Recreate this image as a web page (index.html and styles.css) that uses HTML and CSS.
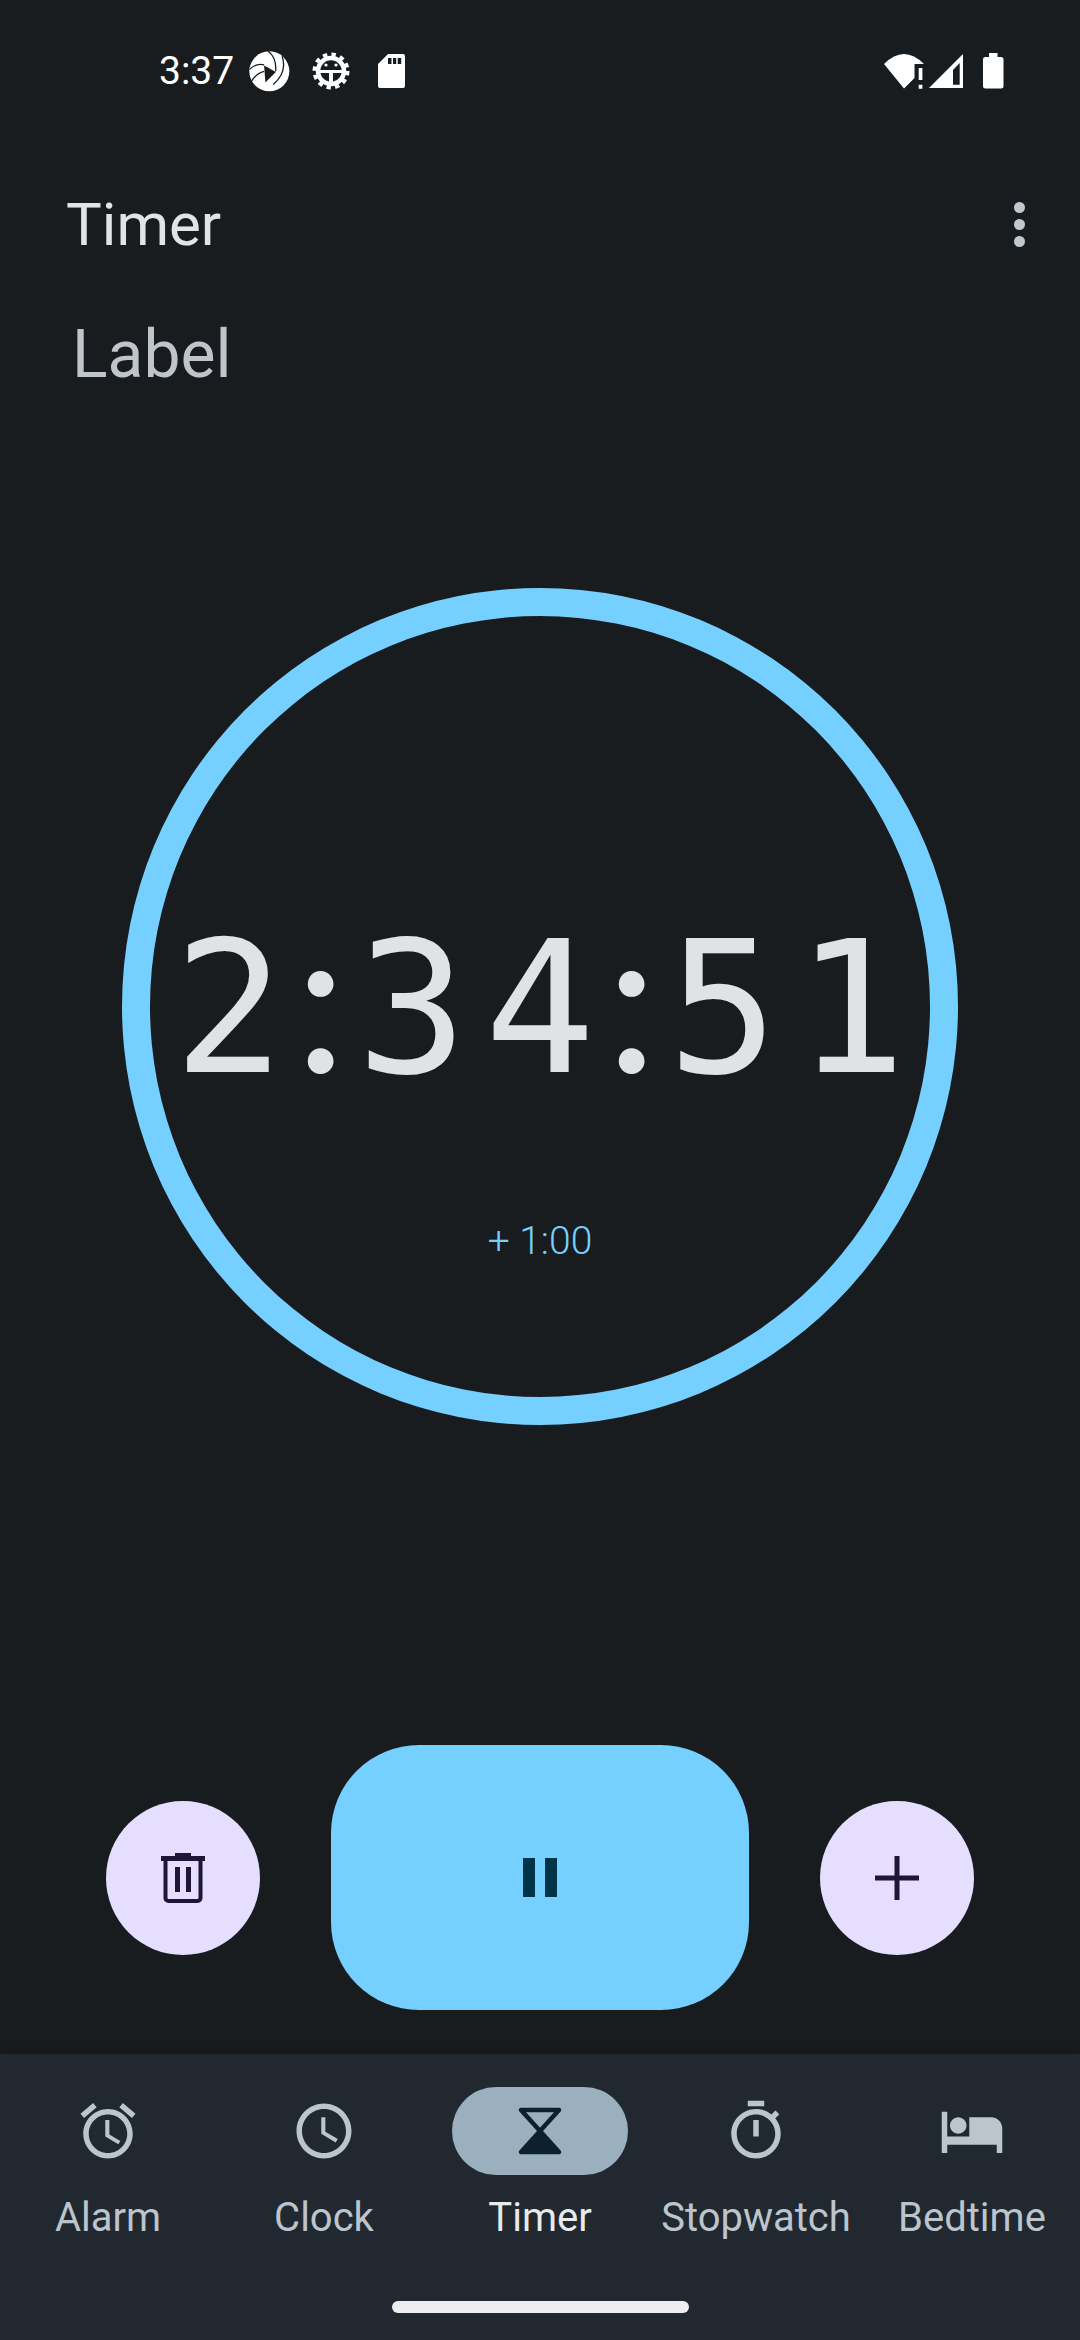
FILE: index.html
```html
<!DOCTYPE html>
<html lang="en">
<head>
<meta charset="UTF-8">
<title>Timer</title>
<link rel="stylesheet" href="styles.css">
</head>
<body>
<div class="phone">

    <div class="status">
        <span class="clock_text">3:37</span>
        <svg class="aperture" viewBox="27 30 123 125">
            <circle cx="88" cy="92" r="61" fill="#fff"/>
            <path d="M72 74L108 94L76 126Z" fill="#191c1f"/>
            <path d="M84 30C102 44 110 62 107 92M28 86C42 72 56 68 72 72M127 46C138 78 128 108 100 132M34 122C44 104 56 96 72 92" fill="none" stroke="#191c1f" stroke-width="4"/>
        </svg>
        <svg class="gear" viewBox="0 0 38 38">
            <circle cx="19" cy="19" r="13" fill="none" stroke="#fff" stroke-width="4.5"/>
            <circle cx="19" cy="19" r="16.5" fill="none" stroke="#fff" stroke-width="4" stroke-dasharray="4.32 4.32"/>
            <path d="M8 18h22v3H21v9h-4v-9H8z" fill="#fff"/>
            <circle cx="14" cy="13" r="1.6" fill="#fff"/>
            <circle cx="24" cy="13" r="1.6" fill="#fff"/>
        </svg>
        <svg class="sdcard" viewBox="0 0 27 34">
            <path fill-rule="evenodd" d="M10 0h15a2 2 0 0 1 2 2v30a2 2 0 0 1-2 2H2a2 2 0 0 1-2-2V10zM10 4v6h3.5V4zM15 4v6h3.2V4zM19.7 4v6h3.5V4z" fill="#fff"/>
        </svg>
        <span class="status_gap"></span>
        <svg class="wifi" viewBox="0 0 40 35">
            <path d="M0 10Q20 -10 40 10L30.5 10V24L20 34.5Z" fill="#fff"/>
            <path d="M34.7 14h3.7v12h-3.7zM34.7 30.7h3.7v4h-3.7z" fill="#fff"/>
        </svg>
        <svg class="signal" viewBox="0 0 34 35">
            <path fill-rule="evenodd" d="M0 34L34 0V34ZM24 16L30.7 9V30.7H24Z" fill="#fff"/>
        </svg>
        <svg class="battery" viewBox="0 0 21 36">
            <path d="M6 0h8.500v4H18a2.500 2.500 0 0 1 2.500 2.500V33a2.500 2.500 0 0 1-2.500 2.500H2.500A2.500 2.500 0 0 1 0 33V6.500A2.500 2.500 0 0 1 2.500 4H6z" fill="#fff"/>
        </svg>
    </div>

    <div class="title_row">
        <span class="title">Timer</span>
        <div class="more">
            <span class="dot"></span>
            <span class="dot"></span>
            <span class="dot"></span>
        </div>
    </div>

    <div class="label">Label</div>

    <div class="dial">
        <div class="time">
            <span class="digit">2</span>
            <span class="colon">:</span>
            <span class="digit">3</span>
            <span class="digit">4</span>
            <span class="colon">:</span>
            <span class="digit">5</span>
            <span class="digit">1</span>
        </div>
        <div class="add_minute">+ 1:00</div>
    </div>

    <div class="controls">
        <div class="round_button">
            <svg class="trash" viewBox="0 0 44 50">
                <path d="M14 0h16v3h14v5H0V3h14z" fill="#1d1636"/>
                <path d="M4.500 8v37a3 3 0 0 0 3 3h29a3 3 0 0 0 3-3V8" fill="none" stroke="#1d1636" stroke-width="4"/>
                <path d="M14 14h5v25h-5zM25 14h5v25h-5z" fill="#1d1636"/>
            </svg>
        </div>
        <div class="pause_button">
            <span class="pause_bar"></span>
            <span class="pause_bar"></span>
        </div>
        <div class="round_button">
            <svg class="plus" viewBox="0 0 44 44">
                <path d="M19.500 0h5v19.500H44v5H24.500V44h-5V24.500H0v-5h19.500z" fill="#1d1636"/>
            </svg>
        </div>
    </div>

    <div class="nav">
        <div class="tabs">
            <div class="tab">
                <div class="tab_icon">
                    <svg viewBox="0 0 24 24"><path d="M22 5.720l-4.600-3.860-1.290 1.530 4.600 3.860L22 5.720zM7.880 3.390L6.600 1.860 2 5.710l1.290 1.530 4.590-3.850zM12.500 8H11v6l4.750 2.850.75-1.230-4-2.370V8zM12 4c-4.970 0-9 4.030-9 9s4.030 9 9 9 9-4.030 9-9-4.030-9-9-9zm0 16c-3.870 0-7-3.130-7-7s3.130-7 7-7 7 3.130 7 7-3.130 7-7 7z"/></svg>
                </div>
                <span>Alarm</span>
            </div>
            <div class="tab">
                <div class="tab_icon">
                    <svg viewBox="0 0 24 24"><path d="M11.990 2C6.470 2 2 6.480 2 12s4.470 10 9.990 10C17.520 22 22 17.520 22 12S17.520 2 11.990 2zM12 20c-4.420 0-8-3.580-8-8s3.580-8 8-8 8 3.580 8 8-3.580 8-8 8zm.5-13H11v6l5.250 3.150.75-1.230-4.500-2.670z"/></svg>
                </div>
                <span>Clock</span>
            </div>
            <div class="tab active">
                <div class="tab_icon">
                    <svg viewBox="0 0 66 66">
                        <path d="M14 12H52L33 33Z" fill="none" stroke="#0d202c" stroke-width="4.500" stroke-linejoin="round"/>
                        <path d="M33 33L52 54H14Z" fill="#0d202c" stroke="#0d202c" stroke-width="4.500" stroke-linejoin="round"/>
                    </svg>
                </div>
                <span>Timer</span>
            </div>
            <div class="tab">
                <div class="tab_icon">
                    <svg viewBox="0 0 24 24"><path d="M15 1H9v2h6V1zm-4 13h2V8h-2v6zm8.030-6.610l1.420-1.420c-.43-.51-.9-.99-1.410-1.410l-1.420 1.420C16.070 4.740 14.120 4 12 4c-4.970 0-9 4.030-9 9s4.020 9 9 9 9-4.030 9-9c0-2.120-.74-4.070-1.970-5.610zM12 20c-3.870 0-7-3.130-7-7s3.130-7 7-7 7 3.130 7 7-3.130 7-7 7z"/></svg>
                </div>
                <span>Stopwatch</span>
            </div>
            <div class="tab">
                <div class="tab_icon">
                    <svg viewBox="0 0 24 24"><path d="M7 13c1.660 0 3-1.340 3-3S8.660 7 7 7s-3 1.340-3 3 1.340 3 3 3zm12-6h-8v7H3V5H1v15h2v-3h18v3h2v-9c0-2.210-1.790-4-4-4z"/></svg>
                </div>
                <span>Bedtime</span>
            </div>
        </div>
        <div class="home_bar"></div>
    </div>

</div>
</body>
</html>
```
FILE: styles.css
```css
* {
    box-sizing: border-box;
}
body {
    margin: 0;
    background-color: #191c1f;
    font-family: Roboto, "Liberation Sans", sans-serif;
}
.phone {
    width: 1080px;
    height: 2340px;
    display: flex;
    flex-direction: column;
    overflow: hidden;
}

.status {
    height: 142px;
    flex: none;
    display: flex;
    align-items: center;
    padding: 0 76px 0 159px;
    color: #fff;
}
.clock_text {
    width: 90px;
    font-size: 39px;
}
.aperture {
    width: 41px;
    height: 41px;
}
.gear {
    width: 38px;
    height: 38px;
    margin-left: 22px;
}
.sdcard {
    width: 27px;
    height: 34px;
    margin-left: 28px;
}
.status_gap {
    flex: 1;
}
.wifi {
    width: 40px;
    height: 35px;
}
.signal {
    width: 34px;
    height: 35px;
    margin-left: 5px;
}
.battery {
    width: 21px;
    height: 36px;
    margin-left: 20px;
}

.title_row {
    height: 82px;
    flex: none;
    margin-top: 41px;
    display: flex;
    align-items: center;
    justify-content: space-between;
    padding: 0 55px 0 66px;
}
.title {
    font-size: 60px;
    color: #e2e3e5;
}
.more {
    display: flex;
    flex-direction: column;
    gap: 6px;
}
.dot {
    width: 11px;
    height: 11px;
    border-radius: 50%;
    background-color: #c0c7ce;
}

.label {
    height: 140px;
    flex: none;
    margin-top: 20px;
    line-height: 140px;
    padding-left: 72px;
    font-size: 66px;
    color: #bfc5cb;
}

.dial {
    width: 836px;
    height: 837px;
    flex: none;
    margin: 163px auto 0;
    padding-top: 275px;
    border: 28px solid #76d0ff;
    border-radius: 50%;
    display: flex;
    flex-direction: column;
    align-items: center;
}
.time {
    display: flex;
    align-items: baseline;
    height: 204px;
    line-height: 204px;
    font-family: "DejaVu Sans Mono", monospace;
    font-size: 184px;
    color: #e1e2e4;
}
.digit {
    width: 128px;
    text-align: center;
}
.colon {
    width: 55px;
    text-align: center;
    font-family: Lato, sans-serif;
    font-size: 205px;
}
.add_minute {
    margin-top: 123px;
    font-size: 39px;
    font-weight: 300;
    color: #76d0ff;
}

.controls {
    height: 265px;
    flex: none;
    margin-top: 320px;
    padding: 0 106px;
    display: flex;
    align-items: center;
    justify-content: space-between;
}
.round_button {
    width: 154px;
    height: 154px;
    border-radius: 50%;
    background-color: #e5deff;
    display: flex;
    align-items: center;
    justify-content: center;
}
.trash {
    width: 44px;
    height: 50px;
}
.plus {
    width: 44px;
    height: 44px;
}
.pause_button {
    width: 418px;
    height: 265px;
    border-radius: 88px;
    background-color: #76d0ff;
    display: flex;
    align-items: center;
    justify-content: center;
    gap: 10px;
}
.pause_bar {
    width: 12px;
    height: 39px;
    background-color: #003549;
}

.nav {
    height: 286px;
    flex: none;
    margin-top: 44px;
    padding-top: 33px;
    background-color: #21282f;
    box-shadow: 0 -4px 8px rgba(0, 0, 0, 0.15);
}
.tabs {
    display: grid;
    grid-template-columns: repeat(5, 1fr);
}
.tab {
    display: flex;
    flex-direction: column;
    align-items: center;
    font-size: 40px;
    color: #bcc4cc;
}
.tab span {
    margin-top: 19px;
    line-height: 48px;
    white-space: nowrap;
}
.tab_icon {
    width: 176px;
    height: 88px;
    border-radius: 44px;
    display: flex;
    align-items: center;
    justify-content: center;
}
.tab_icon svg {
    width: 66px;
    height: 66px;
    fill: #bcc4cc;
}
.active .tab_icon {
    background-color: #9bb0be;
}
.active span {
    color: #e8eaec;
}
.home_bar {
    width: 297px;
    height: 12px;
    margin: 59px auto 0;
    border-radius: 6px;
    background-color: #eceef0;
}
```
